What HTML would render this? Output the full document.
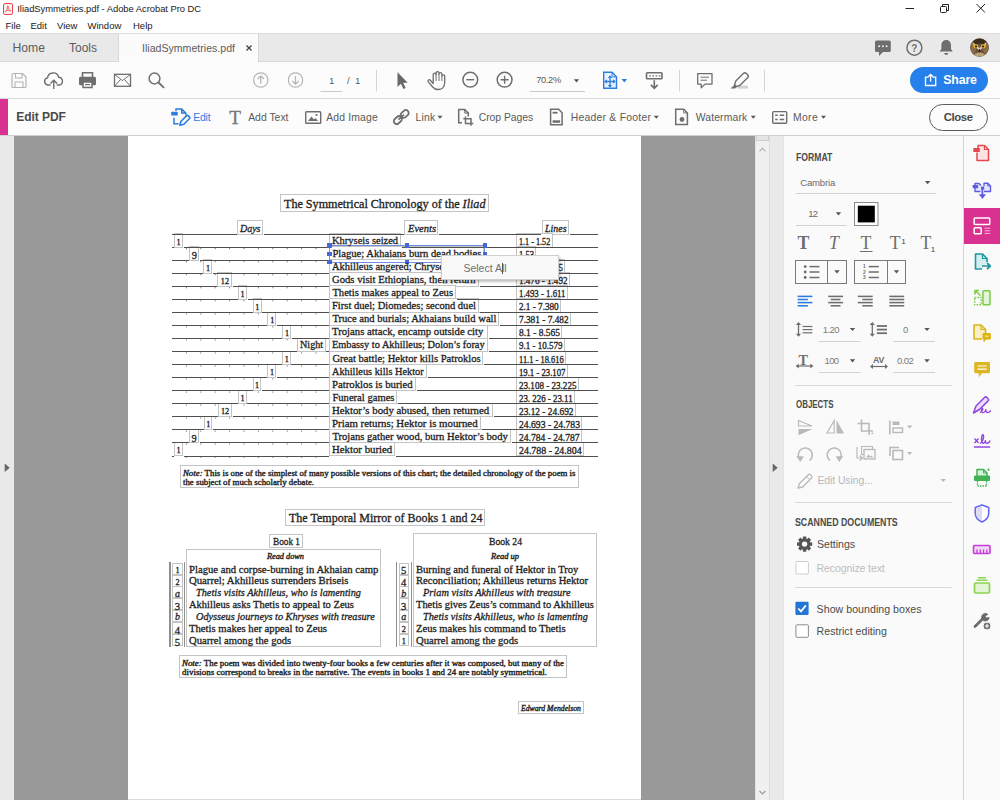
<!DOCTYPE html>
<html><head><meta charset="utf-8"><title>IliadSymmetries.pdf - Adobe Acrobat Pro DC</title><style>
*{box-sizing:border-box;margin:0;padding:0}
html,body{width:1000px;height:800px;overflow:hidden;background:#fff}
body{font-family:"Liberation Sans",sans-serif;position:relative;color:#4b4b4b}
.a{position:absolute}
.t{position:absolute;white-space:nowrap;line-height:1}
.s{font-family:"Liberation Serif",serif;color:#222}
svg{position:absolute;overflow:visible}
.bx{position:absolute;border:1px solid #bdbdbd}
</style></head><body>
<div class="a" style="left:0;top:0;width:1000px;height:17px;background:#fff"></div>
<svg style="left:3.300px;top:2.500px" width="10" height="12" viewBox="0 0 10 12"><rect x="0.5" y="0.5" width="9" height="11" rx="1.5" fill="#fdecec" stroke="#e8484d" stroke-width="1"/><path d="M2.5 8.5 C4 7.5 5 5 4.6 3.4 C4.3 2.6 5.6 2.8 5.2 4 C4.8 5.6 6 7 7.6 7.4 C8.4 7.7 7.6 8.3 6.6 7.700 C5.400 7 3.400 7.600 2.500 8.500Z" fill="none" stroke="#e8484d" stroke-width="0.800"/></svg>
<div class="t" style="left:17.300px;top:4.300px;font-size:9.400px;letter-spacing:-0.030px;color:#1a1a1a">IliadSymmetries.pdf - Adobe Acrobat Pro DC</div>
<svg style="left:0;top:0" width="1000" height="17"><path d="M905.500 8.500 h8.500" stroke="#222" stroke-width="1" fill="none"/><rect x="940.500" y="6.500" width="6" height="6" rx="1" fill="none" stroke="#222"/><path d="M942.500 6.500 v-2 h6 v6 h-2" fill="none" stroke="#222"/><path d="M976.500 4 l8.500 8.500 M985 4 l-8.500 8.500" stroke="#222" stroke-width="1" fill="none"/></svg>
<div class="t" style="left:5.5px;top:20.500px;font-size:9.500px;color:#1a1a1a">File</div>
<div class="t" style="left:30.5px;top:20.500px;font-size:9.500px;color:#1a1a1a">Edit</div>
<div class="t" style="left:57px;top:20.500px;font-size:9.500px;color:#1a1a1a">View</div>
<div class="t" style="left:87.5px;top:20.500px;font-size:9.500px;color:#1a1a1a">Window</div>
<div class="t" style="left:133px;top:20.500px;font-size:9.500px;color:#1a1a1a">Help</div>
<div class="a" style="left:0;top:33px;width:1000px;height:29px;background:#e9e9e9;border-top:1px solid #dedede;border-bottom:1px solid #d8d8d8"></div>
<div class="a" style="left:118px;top:34px;width:141px;height:28px;background:#fbfbfb;border-left:1px solid #d8d8d8;border-right:1px solid #d8d8d8"></div>
<div class="t" style="left:12.500px;top:42px;font-size:12.200px;color:#5c5c5c">Home</div>
<div class="t" style="left:69px;top:42px;font-size:12px;color:#5c5c5c">Tools</div>
<div class="t" style="left:142px;top:43px;font-size:10.600px;color:#5c5c5c">IliadSymmetries.pdf</div>
<svg style="left:245px;top:44px" width="8" height="8"><path d="M1.500 1.500 l5 5 M6.500 1.500 l-5 5" stroke="#444" stroke-width="1.300" fill="none"/></svg>
<svg style="left:0;top:33px" width="1000" height="29"><path d="M876.500 7.500 h12.800 a1.500 1.500 0 0 1 1.500 1.500 v8.500 a1.500 1.500 0 0 1 -1.500 1.500 h-6.300 l-4 4 v-4 h-2.500 a1.500 1.500 0 0 1 -1.500 -1.500 v-8.500 a1.500 1.500 0 0 1 1.500 -1.500z" fill="#6e6e6e"/><circle cx="879.200" cy="13.200" r="1" fill="#eee"/><circle cx="882.900" cy="13.200" r="1" fill="#eee"/><circle cx="886.600" cy="13.200" r="1" fill="#eee"/><circle cx="914.400" cy="14.700" r="7.500" fill="none" stroke="#6e6e6e" stroke-width="1.500"/><text x="914.400" y="18.500" font-size="10" font-weight="bold" text-anchor="middle" fill="#6e6e6e" font-family="Liberation Sans">?</text><path d="M946.200 7 c-3.300 0 -4.800 2.700 -4.800 5.300 v3.700 l-1.800 2.600 h13.200 l-1.800 -2.600 v-3.700 c0 -2.600 -1.500 -5.300 -4.800 -5.300z M944.200 20 a2 2 0 0 0 4 0z" fill="#6e6e6e"/></svg>
<svg style="left:969.500px;top:38px" width="19" height="19" viewBox="0 0 19 19"><defs><clipPath id="av"><circle cx="9.500" cy="9.500" r="9.300"/></clipPath></defs><g clip-path="url(#av)"><rect width="19" height="19" fill="#3b2b1d"/><ellipse cx="9.500" cy="12" rx="7.500" ry="6.500" fill="#6d5236"/><ellipse cx="3" cy="10" rx="3" ry="6" fill="#8a6d48"/><ellipse cx="16" cy="10" rx="3" ry="6" fill="#8a6d48"/><path d="M2.500 4.500 L9.500 10 L16.500 4.500 L15 8 L9.500 12.500 L4 8z" fill="#d8d2c4"/><ellipse cx="5.800" cy="8.300" rx="2.400" ry="2" fill="#e3b52c"/><ellipse cx="13.200" cy="8.300" rx="2.400" ry="2" fill="#e3b52c"/><circle cx="6" cy="8.400" r="1" fill="#111"/><circle cx="13" cy="8.400" r="1" fill="#111"/><path d="M9.500 10.500 l-1.200 3 h2.400z" fill="#1e1610"/><ellipse cx="9.500" cy="17.500" rx="5.500" ry="3" fill="#b9a27c"/></g></svg>
<div class="a" style="left:0;top:62px;width:1000px;height:36.500px;background:#fcfcfc;border-bottom:1px solid #dadada"></div>
<svg style="left:0;top:62px" width="1000" height="36"><path d="M13 11.500 h9.500 l3.500 3.500 v9.500 a1 1 0 0 1 -1 1 h-12 a1 1 0 0 1 -1 -1 v-12 a1 1 0 0 1 1 -1z" fill="none" stroke="#b4b4b4" stroke-width="1.200"/><path d="M15.500 11.500 v4.500 h6.500 v-4.500 M15 25.500 v-5.500 h8 v5.500" fill="none" stroke="#b4b4b4" stroke-width="1.100"/><path d="M50.500 23 h-2.500 a3.600 3.600 0 0 1 -0.500 -7.100 a5.700 5.700 0 0 1 11.200 -0.600 a3.900 3.900 0 0 1 0.700 7.700 h-2.700" fill="none" stroke="#6e6e6e" stroke-width="1.400"/><path d="M53.800 27 v-8.500 M50.500 21.500 l3.300 -3.300 l3.300 3.300" fill="none" stroke="#6e6e6e" stroke-width="1.400"/><path d="M82.500 15 v-4.200 h10 v4.200" fill="none" stroke="#6e6e6e" stroke-width="1.600"/><rect x="79" y="14.800" width="17" height="8.500" rx="1.500" fill="#6e6e6e"/><rect x="83" y="20" width="9" height="5.500" fill="#fcfcfc" stroke="#6e6e6e" stroke-width="1.500"/><rect x="85" y="22" width="5" height="1.200" fill="#6e6e6e"/><rect x="114.500" y="12.300" width="16" height="12" fill="none" stroke="#6e6e6e" stroke-width="1.300"/><path d="M114.500 12.300 l8 6.300 l8 -6.300 M114.500 24.300 l6 -6.800 M130.500 24.300 l-6 -6.800" fill="none" stroke="#6e6e6e" stroke-width="1"/><circle cx="154.500" cy="16.500" r="5.400" fill="none" stroke="#6e6e6e" stroke-width="1.500"/><path d="M158.500 20.500 l5.500 5.300" stroke="#6e6e6e" stroke-width="1.800" fill="none"/><circle cx="260.800" cy="18" r="7.200" fill="none" stroke="#b4b4b4" stroke-width="1.200"/><path d="M260.800 22 v-8 M257.600 17 l3.200 -3.200 l3.200 3.200" fill="none" stroke="#b4b4b4" stroke-width="1.200"/><circle cx="295.500" cy="18" r="7.200" fill="none" stroke="#b4b4b4" stroke-width="1.200"/><path d="M295.500 14 v8 M292.300 19 l3.200 3.200 l3.200 -3.200" fill="none" stroke="#b4b4b4" stroke-width="1.200"/><path d="M320.500 29.500 h21.500 M530 29.500 h55" stroke="#cacaca" stroke-width="1"/><path d="M376.500 8 v21.500 M679.500 8 v21.500 M764.500 8 v21.500" stroke="#d4d4d4" stroke-width="1"/><path d="M397.500 10.200 v14.800 l3.400 -3.200 l2.600 5.300 l2.200 -1.100 l-2.600 -5.200 h4.600z" fill="#686868"/><path d="M433.200 21.500 V12.500 c0 -1.800 2.900 -1.800 2.900 0 V11 c0 -1.800 2.900 -1.800 2.900 0 V12 c0 -1.800 2.900 -1.800 2.900 0 V14 c0 -1.600 2.800 -1.600 2.800 0 V20.500 c0 4.500 -3 7 -6.500 7 c-2.500 0 -4.200 -0.800 -5.500 -2.500 L428.300 19.800 c-1 -1.500 0.800 -2.800 2 -1.600 L433.200 21.500z" fill="none" stroke="#6e6e6e" stroke-width="1.300" stroke-linejoin="round"/><path d="M436.100 12 V19 M439 12 V19 M441.900 14 V19" stroke="#6e6e6e" stroke-width="1" fill="none"/><circle cx="470.300" cy="17.700" r="7.400" fill="none" stroke="#6e6e6e" stroke-width="1.500"/><path d="M466.300 17.700 h8" stroke="#6e6e6e" stroke-width="1.400"/><circle cx="504.600" cy="17.700" r="7.400" fill="none" stroke="#6e6e6e" stroke-width="1.500"/><path d="M500.600 17.700 h8 M504.600 13.700 v8" stroke="#6e6e6e" stroke-width="1.400"/><path d="M573.800 17.200 h5.400 l-2.700 3.200z" fill="#555"/><path d="M603.700 10.300 h8.300 l4.500 4.500 v11.400 h-12.800z" fill="#e9f2fd" stroke="#2c7de0" stroke-width="1.400"/><path d="M612 10.300 v4.500 h4.500" fill="none" stroke="#2c7de0" stroke-width="1"/><path d="M610 15 v9 M605.500 19.500 h9" fill="none" stroke="#2c7de0" stroke-width="1.300"/><path d="M610 13.300 l-2.200 2.700 h4.400z M610 25.700 l-2.200 -2.700 h4.400z M604.200 19.500 l2.700 -2.200 v4.400z M615.800 19.500 l-2.700 -2.200 v4.400z" fill="#2c7de0"/><path d="M621.500 17 h5.600 l-2.800 3.400z" fill="#2c7de0"/><rect x="646.500" y="10.800" width="15.500" height="6" rx="0.800" fill="none" stroke="#6e6e6e" stroke-width="1.600"/><path d="M649.200 13.800 h1.600 M652.400 13.800 h1.600 M655.600 13.800 h1.600 M658.800 13.800 h1.600" stroke="#6e6e6e" stroke-width="1.300"/><path d="M654.300 18.300 v8 M650.900 22.900 l3.400 3.400 l3.400 -3.400" fill="none" stroke="#6e6e6e" stroke-width="1.600"/><path d="M697.700 11.600 h14.300 v10.500 h-7 l-3.800 3.700 v-3.700 h-3.500z" fill="none" stroke="#6e6e6e" stroke-width="1.300" stroke-linejoin="round"/><path d="M700.500 15.200 h8.500 M700.500 18.200 h6.500" stroke="#6e6e6e" stroke-width="1"/><rect x="737.500" y="23.600" width="10.500" height="3" fill="#d2d2d2"/><path d="M734.500 22.800 L736 18.800 L743.300 11.500 a2.200 2.200 0 0 1 3.100 0 l1.200 1.200 a2.200 2.200 0 0 1 0 3.100 L740.300 23.100 L736.300 24.600z" fill="#fcfcfc" stroke="#6e6e6e" stroke-width="1.400" stroke-linejoin="round"/><path d="M734.700 22.500 L730.600 26.500 h4.600 l1.800 -2z" fill="#6e6e6e"/></svg>
<div class="t" style="left:329px;top:75.500px;font-size:9.500px;color:#5a5a5a">1</div>
<div class="t" style="left:347px;top:75.500px;font-size:9.500px;color:#5a5a5a">/&nbsp; 1</div>
<div class="t" style="left:536.200px;top:75.500px;font-size:9.300px;color:#5a5a5a;letter-spacing:-0.350px">70.2%</div>
<div class="a" style="left:910px;top:67px;width:78px;height:26px;border-radius:13px;background:#2680eb"></div>
<svg style="left:923.500px;top:72.500px" width="14" height="15"><path d="M4.500 4.200 h-3 v8.300 h10.200 v-8.300 h-3 M6.600 8.800 v-7.300 M4.200 3.700 l2.400 -2.400 l2.400 2.400" fill="none" stroke="#fff" stroke-width="1.300"/></svg>
<div class="t" style="left:943.300px;top:73.700px;font-size:12.300px;font-weight:bold;color:#fff;letter-spacing:-0.150px">Share</div>
<div class="a" style="left:0;top:99px;width:1000px;height:37px;background:#fcfcfc;border-bottom:1px solid #cfcfcf"></div>
<div class="a" style="left:0;top:99px;width:8px;height:36px;background:#d9318f"></div>
<div class="t" style="left:16.200px;top:111.200px;font-size:12px;font-weight:bold;color:#4a4a4a;letter-spacing:-0.050px">Edit PDF</div>
<svg style="left:0;top:99px" width="1000" height="37"><path d="M176 12 V10 H181.700 L185.800 14.100 V16.500 M181.700 10 V14.100 H185.800" fill="none" stroke="#2c7de0" stroke-width="1.500"/><path d="M174 18.800 V24.800 H178.500" fill="none" stroke="#2c7de0" stroke-width="1.500"/><rect x="171.200" y="12.800" width="6.600" height="3.800" rx="0.600" fill="#2c7de0"/><path d="M179.800 26.200 L181 22.300 L186.700 16.600 a1 1 0 0 1 1.400 0 L189.600 18.100 a1 1 0 0 1 0 1.400 L183.900 25.200z" fill="#fcfcfc" stroke="#2c7de0" stroke-width="1.600" stroke-linejoin="round"/><rect x="305.700" y="12.700" width="15" height="11.500" rx="0.800" fill="none" stroke="#6e6e6e" stroke-width="1.400"/><path d="M308 22 l3.500 -4.500 l2.500 3 l1.500 -1.500 l2.500 3z" fill="#6e6e6e"/><circle cx="316.500" cy="16" r="1.100" fill="#6e6e6e"/><g transform="translate(401.250 18.050) rotate(-42)" fill="none" stroke="#6e6e6e" stroke-width="1.800"><rect x="0.200" y="-2.900" width="8.800" height="5.800" rx="2.900"/><rect x="-9" y="-2.900" width="8.800" height="5.800" rx="2.900"/><path d="M-3.800 0 H3.800" stroke-width="1.700"/></g><path d="M437.500 16.800 h5 l-2.500 3z" fill="#555"/><path d="M462 23.800 h-3.300 v-13.300 h6 l3.600 3.600 v3.500" fill="none" stroke="#6e6e6e" stroke-width="1.500"/><path d="M464.700 10.500 v3.600 h3.600" fill="none" stroke="#6e6e6e" stroke-width="1"/><path d="M465.500 17.500 v7 h7.800 M463.300 19.700 h7.700 v7" fill="none" stroke="#6e6e6e" stroke-width="1.500"/><path d="M550.600 10.300 h8 l3.500 3.500 v12 h-11.500z" fill="none" stroke="#6e6e6e" stroke-width="1.500"/><rect x="552.600" y="12.800" width="5" height="1.800" fill="#6e6e6e"/><rect x="552.600" y="21.300" width="7.500" height="2.500" fill="#6e6e6e"/><path d="M653.800 16.800 h5 l-2.500 3z" fill="#555"/><path d="M675.700 10.300 h8 l3.700 3.700 v11.500 h-11.700z" fill="none" stroke="#6e6e6e" stroke-width="1.500"/><path d="M683.700 10.300 v3.700 h3.700" fill="none" stroke="#6e6e6e" stroke-width="0.900"/><circle cx="682" cy="20.500" r="2.400" fill="#6e6e6e"/><path d="M750.800 16.800 h5 l-2.500 3z" fill="#555"/><rect x="772.700" y="12.600" width="14" height="11.600" rx="1" fill="none" stroke="#6e6e6e" stroke-width="1.400"/><path d="M775.200 16.200 h2.500 M775.200 20.600 h2.500 M779.700 16.200 h4.500 M779.700 20.600 h4.500" stroke="#6e6e6e" stroke-width="1.500"/><path d="M821 16.800 h5 l-2.500 3z" fill="#555"/></svg>
<div class="t" style="left:229.200px;top:107.67px;font-size:19.200px;color:#757575;-webkit-text-stroke:0.300px #757575;font-family:'Liberation Serif',serif">T</div>
<div class="t" style="left:193.3px;top:112.60px;font-size:10.4px;color:#2c7de0;letter-spacing:-0.202px">Edit</div>
<div class="t" style="left:248.2px;top:112.60px;font-size:10.4px;color:#5a5a5a;letter-spacing:0.006px">Add Text</div>
<div class="t" style="left:326.2px;top:112.60px;font-size:10.4px;color:#5a5a5a;letter-spacing:0.170px">Add Image</div>
<div class="t" style="left:415.5px;top:112.60px;font-size:10.4px;color:#5a5a5a;letter-spacing:0.234px">Link</div>
<div class="t" style="left:478.7px;top:112.60px;font-size:10.4px;color:#5a5a5a;letter-spacing:-0.037px">Crop Pages</div>
<div class="t" style="left:570.7px;top:112.60px;font-size:10.4px;color:#5a5a5a;letter-spacing:0.245px">Header &amp; Footer</div>
<div class="t" style="left:695.7px;top:112.60px;font-size:10.4px;color:#5a5a5a;letter-spacing:0.142px">Watermark</div>
<div class="t" style="left:793px;top:112.60px;font-size:10.4px;color:#5a5a5a;letter-spacing:0.328px">More</div>
<div class="a" style="left:928.500px;top:104px;width:59.500px;height:26.500px;border-radius:13.500px;border:1.400px solid #5a5a5a;background:#fcfcfc"></div>
<div class="t" style="left:943.700px;top:111.800px;font-size:11.400px;font-weight:bold;color:#4a4a4a;letter-spacing:-0.400px">Close</div>
<div class="a" style="left:0;top:136px;width:1000px;height:664px;background:#999"></div>
<div class="a" style="left:0;top:136px;width:14px;height:664px;background:#e9e9e9"></div>
<svg style="left:4px;top:463px" width="7" height="10"><path d="M0.700 0.400 L5.700 4.650 L0.700 8.900z" fill="#666"/></svg>
<div class="a" style="left:128px;top:136px;width:513px;height:664px;background:#fff;border-bottom:1px solid #dcdcdc"></div>
<svg style="left:0;top:0" width="1000" height="800"><rect x="185.9" y="248.1" width="1" height="1.100" fill="#6a6a6a"/><rect x="200.3" y="248.1" width="1" height="1.100" fill="#6a6a6a"/><rect x="214.7" y="248.1" width="1" height="1.100" fill="#6a6a6a"/><rect x="229.1" y="248.1" width="1" height="1.100" fill="#6a6a6a"/><rect x="243.5" y="248.1" width="1" height="1.100" fill="#6a6a6a"/><rect x="257.9" y="248.1" width="1" height="1.100" fill="#6a6a6a"/><rect x="272.3" y="248.1" width="1" height="1.100" fill="#6a6a6a"/><rect x="286.7" y="248.1" width="1" height="1.100" fill="#6a6a6a"/><rect x="301.1" y="248.1" width="1" height="1.100" fill="#6a6a6a"/><rect x="315.5" y="248.1" width="1" height="1.100" fill="#6a6a6a"/><rect x="185.9" y="261.2" width="1" height="1.100" fill="#6a6a6a"/><rect x="200.3" y="261.2" width="1" height="1.100" fill="#6a6a6a"/><rect x="214.7" y="261.2" width="1" height="1.100" fill="#6a6a6a"/><rect x="229.1" y="261.2" width="1" height="1.100" fill="#6a6a6a"/><rect x="243.5" y="261.2" width="1" height="1.100" fill="#6a6a6a"/><rect x="257.9" y="261.2" width="1" height="1.100" fill="#6a6a6a"/><rect x="272.3" y="261.2" width="1" height="1.100" fill="#6a6a6a"/><rect x="286.7" y="261.2" width="1" height="1.100" fill="#6a6a6a"/><rect x="301.1" y="261.2" width="1" height="1.100" fill="#6a6a6a"/><rect x="315.5" y="261.2" width="1" height="1.100" fill="#6a6a6a"/><rect x="185.9" y="274.2" width="1" height="1.100" fill="#6a6a6a"/><rect x="200.3" y="274.2" width="1" height="1.100" fill="#6a6a6a"/><rect x="214.7" y="274.2" width="1" height="1.100" fill="#6a6a6a"/><rect x="229.1" y="274.2" width="1" height="1.100" fill="#6a6a6a"/><rect x="243.5" y="274.2" width="1" height="1.100" fill="#6a6a6a"/><rect x="257.9" y="274.2" width="1" height="1.100" fill="#6a6a6a"/><rect x="272.3" y="274.2" width="1" height="1.100" fill="#6a6a6a"/><rect x="286.7" y="274.2" width="1" height="1.100" fill="#6a6a6a"/><rect x="301.1" y="274.2" width="1" height="1.100" fill="#6a6a6a"/><rect x="315.5" y="274.2" width="1" height="1.100" fill="#6a6a6a"/><rect x="185.9" y="287.2" width="1" height="1.100" fill="#6a6a6a"/><rect x="200.3" y="287.2" width="1" height="1.100" fill="#6a6a6a"/><rect x="214.7" y="287.2" width="1" height="1.100" fill="#6a6a6a"/><rect x="229.1" y="287.2" width="1" height="1.100" fill="#6a6a6a"/><rect x="243.5" y="287.2" width="1" height="1.100" fill="#6a6a6a"/><rect x="257.9" y="287.2" width="1" height="1.100" fill="#6a6a6a"/><rect x="272.3" y="287.2" width="1" height="1.100" fill="#6a6a6a"/><rect x="286.7" y="287.2" width="1" height="1.100" fill="#6a6a6a"/><rect x="301.1" y="287.2" width="1" height="1.100" fill="#6a6a6a"/><rect x="315.5" y="287.2" width="1" height="1.100" fill="#6a6a6a"/><rect x="185.9" y="300.2" width="1" height="1.100" fill="#6a6a6a"/><rect x="200.3" y="300.2" width="1" height="1.100" fill="#6a6a6a"/><rect x="214.7" y="300.2" width="1" height="1.100" fill="#6a6a6a"/><rect x="229.1" y="300.2" width="1" height="1.100" fill="#6a6a6a"/><rect x="243.5" y="300.2" width="1" height="1.100" fill="#6a6a6a"/><rect x="257.9" y="300.2" width="1" height="1.100" fill="#6a6a6a"/><rect x="272.3" y="300.2" width="1" height="1.100" fill="#6a6a6a"/><rect x="286.7" y="300.2" width="1" height="1.100" fill="#6a6a6a"/><rect x="301.1" y="300.2" width="1" height="1.100" fill="#6a6a6a"/><rect x="315.5" y="300.2" width="1" height="1.100" fill="#6a6a6a"/><rect x="185.9" y="313.3" width="1" height="1.100" fill="#6a6a6a"/><rect x="200.3" y="313.3" width="1" height="1.100" fill="#6a6a6a"/><rect x="214.7" y="313.3" width="1" height="1.100" fill="#6a6a6a"/><rect x="229.1" y="313.3" width="1" height="1.100" fill="#6a6a6a"/><rect x="243.5" y="313.3" width="1" height="1.100" fill="#6a6a6a"/><rect x="257.9" y="313.3" width="1" height="1.100" fill="#6a6a6a"/><rect x="272.3" y="313.3" width="1" height="1.100" fill="#6a6a6a"/><rect x="286.7" y="313.3" width="1" height="1.100" fill="#6a6a6a"/><rect x="301.1" y="313.3" width="1" height="1.100" fill="#6a6a6a"/><rect x="315.5" y="313.3" width="1" height="1.100" fill="#6a6a6a"/><rect x="185.9" y="326.3" width="1" height="1.100" fill="#6a6a6a"/><rect x="200.3" y="326.3" width="1" height="1.100" fill="#6a6a6a"/><rect x="214.7" y="326.3" width="1" height="1.100" fill="#6a6a6a"/><rect x="229.1" y="326.3" width="1" height="1.100" fill="#6a6a6a"/><rect x="243.5" y="326.3" width="1" height="1.100" fill="#6a6a6a"/><rect x="257.9" y="326.3" width="1" height="1.100" fill="#6a6a6a"/><rect x="272.3" y="326.3" width="1" height="1.100" fill="#6a6a6a"/><rect x="286.7" y="326.3" width="1" height="1.100" fill="#6a6a6a"/><rect x="301.1" y="326.3" width="1" height="1.100" fill="#6a6a6a"/><rect x="315.5" y="326.3" width="1" height="1.100" fill="#6a6a6a"/><rect x="185.9" y="339.3" width="1" height="1.100" fill="#6a6a6a"/><rect x="200.3" y="339.3" width="1" height="1.100" fill="#6a6a6a"/><rect x="214.7" y="339.3" width="1" height="1.100" fill="#6a6a6a"/><rect x="229.1" y="339.3" width="1" height="1.100" fill="#6a6a6a"/><rect x="243.5" y="339.3" width="1" height="1.100" fill="#6a6a6a"/><rect x="257.9" y="339.3" width="1" height="1.100" fill="#6a6a6a"/><rect x="272.3" y="339.3" width="1" height="1.100" fill="#6a6a6a"/><rect x="286.7" y="339.3" width="1" height="1.100" fill="#6a6a6a"/><rect x="301.1" y="339.3" width="1" height="1.100" fill="#6a6a6a"/><rect x="315.5" y="339.3" width="1" height="1.100" fill="#6a6a6a"/><rect x="185.9" y="352.4" width="1" height="1.100" fill="#6a6a6a"/><rect x="200.3" y="352.4" width="1" height="1.100" fill="#6a6a6a"/><rect x="214.7" y="352.4" width="1" height="1.100" fill="#6a6a6a"/><rect x="229.1" y="352.4" width="1" height="1.100" fill="#6a6a6a"/><rect x="243.5" y="352.4" width="1" height="1.100" fill="#6a6a6a"/><rect x="257.9" y="352.4" width="1" height="1.100" fill="#6a6a6a"/><rect x="272.3" y="352.4" width="1" height="1.100" fill="#6a6a6a"/><rect x="286.7" y="352.4" width="1" height="1.100" fill="#6a6a6a"/><rect x="301.1" y="352.4" width="1" height="1.100" fill="#6a6a6a"/><rect x="315.5" y="352.4" width="1" height="1.100" fill="#6a6a6a"/><rect x="185.9" y="365.4" width="1" height="1.100" fill="#6a6a6a"/><rect x="200.3" y="365.4" width="1" height="1.100" fill="#6a6a6a"/><rect x="214.7" y="365.4" width="1" height="1.100" fill="#6a6a6a"/><rect x="229.1" y="365.4" width="1" height="1.100" fill="#6a6a6a"/><rect x="243.5" y="365.4" width="1" height="1.100" fill="#6a6a6a"/><rect x="257.9" y="365.4" width="1" height="1.100" fill="#6a6a6a"/><rect x="272.3" y="365.4" width="1" height="1.100" fill="#6a6a6a"/><rect x="286.7" y="365.4" width="1" height="1.100" fill="#6a6a6a"/><rect x="301.1" y="365.4" width="1" height="1.100" fill="#6a6a6a"/><rect x="315.5" y="365.4" width="1" height="1.100" fill="#6a6a6a"/><rect x="185.9" y="378.4" width="1" height="1.100" fill="#6a6a6a"/><rect x="200.3" y="378.4" width="1" height="1.100" fill="#6a6a6a"/><rect x="214.7" y="378.4" width="1" height="1.100" fill="#6a6a6a"/><rect x="229.1" y="378.4" width="1" height="1.100" fill="#6a6a6a"/><rect x="243.5" y="378.4" width="1" height="1.100" fill="#6a6a6a"/><rect x="257.9" y="378.4" width="1" height="1.100" fill="#6a6a6a"/><rect x="272.3" y="378.4" width="1" height="1.100" fill="#6a6a6a"/><rect x="286.7" y="378.4" width="1" height="1.100" fill="#6a6a6a"/><rect x="301.1" y="378.4" width="1" height="1.100" fill="#6a6a6a"/><rect x="315.5" y="378.4" width="1" height="1.100" fill="#6a6a6a"/><rect x="185.9" y="391.5" width="1" height="1.100" fill="#6a6a6a"/><rect x="200.3" y="391.5" width="1" height="1.100" fill="#6a6a6a"/><rect x="214.7" y="391.5" width="1" height="1.100" fill="#6a6a6a"/><rect x="229.1" y="391.5" width="1" height="1.100" fill="#6a6a6a"/><rect x="243.5" y="391.5" width="1" height="1.100" fill="#6a6a6a"/><rect x="257.9" y="391.5" width="1" height="1.100" fill="#6a6a6a"/><rect x="272.3" y="391.5" width="1" height="1.100" fill="#6a6a6a"/><rect x="286.7" y="391.5" width="1" height="1.100" fill="#6a6a6a"/><rect x="301.1" y="391.5" width="1" height="1.100" fill="#6a6a6a"/><rect x="315.5" y="391.5" width="1" height="1.100" fill="#6a6a6a"/><rect x="185.9" y="404.5" width="1" height="1.100" fill="#6a6a6a"/><rect x="200.3" y="404.5" width="1" height="1.100" fill="#6a6a6a"/><rect x="214.7" y="404.5" width="1" height="1.100" fill="#6a6a6a"/><rect x="229.1" y="404.5" width="1" height="1.100" fill="#6a6a6a"/><rect x="243.5" y="404.5" width="1" height="1.100" fill="#6a6a6a"/><rect x="257.9" y="404.5" width="1" height="1.100" fill="#6a6a6a"/><rect x="272.3" y="404.5" width="1" height="1.100" fill="#6a6a6a"/><rect x="286.7" y="404.5" width="1" height="1.100" fill="#6a6a6a"/><rect x="301.1" y="404.5" width="1" height="1.100" fill="#6a6a6a"/><rect x="315.5" y="404.5" width="1" height="1.100" fill="#6a6a6a"/><rect x="185.9" y="417.5" width="1" height="1.100" fill="#6a6a6a"/><rect x="200.3" y="417.5" width="1" height="1.100" fill="#6a6a6a"/><rect x="214.7" y="417.5" width="1" height="1.100" fill="#6a6a6a"/><rect x="229.1" y="417.5" width="1" height="1.100" fill="#6a6a6a"/><rect x="243.5" y="417.5" width="1" height="1.100" fill="#6a6a6a"/><rect x="257.9" y="417.5" width="1" height="1.100" fill="#6a6a6a"/><rect x="272.3" y="417.5" width="1" height="1.100" fill="#6a6a6a"/><rect x="286.7" y="417.5" width="1" height="1.100" fill="#6a6a6a"/><rect x="301.1" y="417.5" width="1" height="1.100" fill="#6a6a6a"/><rect x="315.5" y="417.5" width="1" height="1.100" fill="#6a6a6a"/><rect x="185.9" y="430.6" width="1" height="1.100" fill="#6a6a6a"/><rect x="200.3" y="430.6" width="1" height="1.100" fill="#6a6a6a"/><rect x="214.7" y="430.6" width="1" height="1.100" fill="#6a6a6a"/><rect x="229.1" y="430.6" width="1" height="1.100" fill="#6a6a6a"/><rect x="243.5" y="430.6" width="1" height="1.100" fill="#6a6a6a"/><rect x="257.9" y="430.6" width="1" height="1.100" fill="#6a6a6a"/><rect x="272.3" y="430.6" width="1" height="1.100" fill="#6a6a6a"/><rect x="286.7" y="430.6" width="1" height="1.100" fill="#6a6a6a"/><rect x="301.1" y="430.6" width="1" height="1.100" fill="#6a6a6a"/><rect x="315.5" y="430.6" width="1" height="1.100" fill="#6a6a6a"/><rect x="185.9" y="443.6" width="1" height="1.100" fill="#6a6a6a"/><rect x="200.3" y="443.6" width="1" height="1.100" fill="#6a6a6a"/><rect x="214.7" y="443.6" width="1" height="1.100" fill="#6a6a6a"/><rect x="229.1" y="443.6" width="1" height="1.100" fill="#6a6a6a"/><rect x="243.5" y="443.6" width="1" height="1.100" fill="#6a6a6a"/><rect x="257.9" y="443.6" width="1" height="1.100" fill="#6a6a6a"/><rect x="272.3" y="443.6" width="1" height="1.100" fill="#6a6a6a"/><rect x="286.7" y="443.6" width="1" height="1.100" fill="#6a6a6a"/><rect x="301.1" y="443.6" width="1" height="1.100" fill="#6a6a6a"/><rect x="315.5" y="443.6" width="1" height="1.100" fill="#6a6a6a"/><rect x="185.9" y="456.6" width="1" height="1.100" fill="#6a6a6a"/><rect x="200.3" y="456.6" width="1" height="1.100" fill="#6a6a6a"/><rect x="214.7" y="456.6" width="1" height="1.100" fill="#6a6a6a"/><rect x="229.1" y="456.6" width="1" height="1.100" fill="#6a6a6a"/><rect x="243.5" y="456.6" width="1" height="1.100" fill="#6a6a6a"/><rect x="257.9" y="456.6" width="1" height="1.100" fill="#6a6a6a"/><rect x="272.3" y="456.6" width="1" height="1.100" fill="#6a6a6a"/><rect x="286.7" y="456.6" width="1" height="1.100" fill="#6a6a6a"/><rect x="301.1" y="456.6" width="1" height="1.100" fill="#6a6a6a"/><rect x="315.5" y="456.6" width="1" height="1.100" fill="#6a6a6a"/></svg>
<div class="a" style="left:280.2px;top:193.5px;width:208.4px;height:18.9px;border:1px solid #c4c4c4;background:#fff"></div>
<div class="a" style="left:236.6px;top:220.0px;width:26.5px;height:15.0px;border:1px solid #c4c4c4;background:#fff"></div>
<div class="a" style="left:404.0px;top:220.0px;width:34.4px;height:15.0px;border:1px solid #c4c4c4;background:#fff"></div>
<div class="a" style="left:541.5px;top:220.2px;width:27.7px;height:14.6px;border:1px solid #c4c4c4;background:#fff"></div>
<div class="a" style="left:173.6px;top:233.3px;width:9.4px;height:14.4px;border:1px solid #c4c4c4;background:#fff"></div>
<div class="a" style="left:329.0px;top:233.3px;width:72.0px;height:14.4px;border:1px solid #c4c4c4;background:#fff"></div>
<div class="a" style="left:516.4px;top:233.3px;width:36.3px;height:14.4px;border:1px solid #c4c4c4;background:#fff"></div>
<div class="a" style="left:188.8px;top:246.3px;width:10.4px;height:14.4px;border:1px solid #c4c4c4;background:#fff"></div>
<div class="a" style="left:329.0px;top:246.3px;width:155.0px;height:14.4px;border:1px solid #c4c4c4;background:#fff"></div>
<div class="a" style="left:516.4px;top:246.3px;width:20.1px;height:14.4px;border:1px solid #c4c4c4;background:#fff"></div>
<div class="a" style="left:203.3px;top:259.4px;width:8.9px;height:14.4px;border:1px solid #c4c4c4;background:#fff"></div>
<div class="a" style="left:329.0px;top:259.4px;width:163.0px;height:14.4px;border:1px solid #c4c4c4;background:#fff"></div>
<div class="a" style="left:516.4px;top:259.4px;width:49.1px;height:14.4px;border:1px solid #c4c4c4;background:#fff"></div>
<div class="a" style="left:217.2px;top:272.4px;width:14.8px;height:14.4px;border:1px solid #c4c4c4;background:#fff"></div>
<div class="a" style="left:329.0px;top:272.4px;width:150.0px;height:14.4px;border:1px solid #c4c4c4;background:#fff"></div>
<div class="a" style="left:516.4px;top:272.4px;width:53.6px;height:14.4px;border:1px solid #c4c4c4;background:#fff"></div>
<div class="a" style="left:237.5px;top:285.4px;width:9.5px;height:14.4px;border:1px solid #c4c4c4;background:#fff"></div>
<div class="a" style="left:329.0px;top:285.4px;width:127.0px;height:14.4px;border:1px solid #c4c4c4;background:#fff"></div>
<div class="a" style="left:516.4px;top:285.4px;width:51.6px;height:14.4px;border:1px solid #c4c4c4;background:#fff"></div>
<div class="a" style="left:252.5px;top:298.4px;width:9.0px;height:14.4px;border:1px solid #c4c4c4;background:#fff"></div>
<div class="a" style="left:329.0px;top:298.4px;width:150.0px;height:14.4px;border:1px solid #c4c4c4;background:#fff"></div>
<div class="a" style="left:516.4px;top:298.4px;width:44.8px;height:14.4px;border:1px solid #c4c4c4;background:#fff"></div>
<div class="a" style="left:267.4px;top:311.5px;width:9.1px;height:14.4px;border:1px solid #c4c4c4;background:#fff"></div>
<div class="a" style="left:329.0px;top:311.5px;width:170.4px;height:14.4px;border:1px solid #c4c4c4;background:#fff"></div>
<div class="a" style="left:516.4px;top:311.5px;width:54.6px;height:14.4px;border:1px solid #c4c4c4;background:#fff"></div>
<div class="a" style="left:282.3px;top:324.5px;width:8.7px;height:14.4px;border:1px solid #c4c4c4;background:#fff"></div>
<div class="a" style="left:329.0px;top:324.5px;width:159.0px;height:14.4px;border:1px solid #c4c4c4;background:#fff"></div>
<div class="a" style="left:516.4px;top:324.5px;width:46.1px;height:14.4px;border:1px solid #c4c4c4;background:#fff"></div>
<div class="a" style="left:296.7px;top:337.5px;width:29.2px;height:14.4px;border:1px solid #c4c4c4;background:#fff"></div>
<div class="a" style="left:329.0px;top:337.5px;width:159.0px;height:14.4px;border:1px solid #c4c4c4;background:#fff"></div>
<div class="a" style="left:516.4px;top:337.5px;width:48.5px;height:14.4px;border:1px solid #c4c4c4;background:#fff"></div>
<div class="a" style="left:282.3px;top:350.6px;width:8.5px;height:14.4px;border:1px solid #c4c4c4;background:#fff"></div>
<div class="a" style="left:329.0px;top:350.6px;width:154.0px;height:14.4px;border:1px solid #c4c4c4;background:#fff"></div>
<div class="a" style="left:516.4px;top:350.6px;width:49.7px;height:14.4px;border:1px solid #c4c4c4;background:#fff"></div>
<div class="a" style="left:267.4px;top:363.6px;width:8.6px;height:14.4px;border:1px solid #c4c4c4;background:#fff"></div>
<div class="a" style="left:329.0px;top:363.6px;width:98.0px;height:14.4px;border:1px solid #c4c4c4;background:#fff"></div>
<div class="a" style="left:516.4px;top:363.6px;width:51.5px;height:14.4px;border:1px solid #c4c4c4;background:#fff"></div>
<div class="a" style="left:252.5px;top:376.6px;width:8.5px;height:14.4px;border:1px solid #c4c4c4;background:#fff"></div>
<div class="a" style="left:329.0px;top:376.6px;width:87.0px;height:14.4px;border:1px solid #c4c4c4;background:#fff"></div>
<div class="a" style="left:516.4px;top:376.6px;width:62.6px;height:14.4px;border:1px solid #c4c4c4;background:#fff"></div>
<div class="a" style="left:237.9px;top:389.7px;width:8.9px;height:14.4px;border:1px solid #c4c4c4;background:#fff"></div>
<div class="a" style="left:329.0px;top:389.7px;width:68.0px;height:14.4px;border:1px solid #c4c4c4;background:#fff"></div>
<div class="a" style="left:516.4px;top:389.7px;width:58.7px;height:14.4px;border:1px solid #c4c4c4;background:#fff"></div>
<div class="a" style="left:217.5px;top:402.7px;width:14.5px;height:14.4px;border:1px solid #c4c4c4;background:#fff"></div>
<div class="a" style="left:329.0px;top:402.7px;width:164.0px;height:14.4px;border:1px solid #c4c4c4;background:#fff"></div>
<div class="a" style="left:516.4px;top:402.7px;width:59.6px;height:14.4px;border:1px solid #c4c4c4;background:#fff"></div>
<div class="a" style="left:203.7px;top:415.7px;width:8.5px;height:14.4px;border:1px solid #c4c4c4;background:#fff"></div>
<div class="a" style="left:329.0px;top:415.7px;width:152.0px;height:14.4px;border:1px solid #c4c4c4;background:#fff"></div>
<div class="a" style="left:516.4px;top:415.7px;width:66.1px;height:14.4px;border:1px solid #c4c4c4;background:#fff"></div>
<div class="a" style="left:188.8px;top:428.8px;width:10.2px;height:14.4px;border:1px solid #c4c4c4;background:#fff"></div>
<div class="a" style="left:329.0px;top:428.8px;width:182.0px;height:14.4px;border:1px solid #c4c4c4;background:#fff"></div>
<div class="a" style="left:516.4px;top:428.8px;width:65.6px;height:14.4px;border:1px solid #c4c4c4;background:#fff"></div>
<div class="a" style="left:173.5px;top:441.8px;width:9.5px;height:14.4px;border:1px solid #c4c4c4;background:#fff"></div>
<div class="a" style="left:329.0px;top:441.8px;width:66.0px;height:14.4px;border:1px solid #c4c4c4;background:#fff"></div>
<div class="a" style="left:516.4px;top:441.8px;width:67.7px;height:14.4px;border:1px solid #c4c4c4;background:#fff"></div>
<div class="a" style="left:171.5px;top:234.00px;width:65.1px;height:1px;background:#505050"></div>
<div class="a" style="left:263.6px;top:234.00px;width:140.4px;height:1px;background:#505050"></div>
<div class="a" style="left:438.9px;top:234.00px;width:102.6px;height:1px;background:#505050"></div>
<div class="a" style="left:569.7px;top:234.00px;width:28.3px;height:1px;background:#505050"></div>
<div class="a" style="left:171.5px;top:247.03px;width:2.1px;height:1px;background:#505050"></div>
<div class="a" style="left:183.5px;top:247.03px;width:145.5px;height:1px;background:#505050"></div>
<div class="a" style="left:401.5px;top:247.03px;width:196.5px;height:1px;background:#505050"></div>
<div class="a" style="left:171.5px;top:260.06px;width:17.3px;height:1px;background:#505050"></div>
<div class="a" style="left:199.7px;top:260.06px;width:129.3px;height:1px;background:#505050"></div>
<div class="a" style="left:484.5px;top:260.06px;width:113.5px;height:1px;background:#505050"></div>
<div class="a" style="left:171.5px;top:273.09px;width:31.8px;height:1px;background:#505050"></div>
<div class="a" style="left:212.7px;top:273.09px;width:116.3px;height:1px;background:#505050"></div>
<div class="a" style="left:492.5px;top:273.09px;width:105.5px;height:1px;background:#505050"></div>
<div class="a" style="left:171.5px;top:286.12px;width:45.7px;height:1px;background:#505050"></div>
<div class="a" style="left:232.5px;top:286.12px;width:96.5px;height:1px;background:#505050"></div>
<div class="a" style="left:479.5px;top:286.12px;width:118.5px;height:1px;background:#505050"></div>
<div class="a" style="left:171.5px;top:299.15px;width:66.0px;height:1px;background:#505050"></div>
<div class="a" style="left:247.5px;top:299.15px;width:81.5px;height:1px;background:#505050"></div>
<div class="a" style="left:456.5px;top:299.15px;width:141.5px;height:1px;background:#505050"></div>
<div class="a" style="left:171.5px;top:312.18px;width:81.0px;height:1px;background:#505050"></div>
<div class="a" style="left:262.0px;top:312.18px;width:67.0px;height:1px;background:#505050"></div>
<div class="a" style="left:479.5px;top:312.18px;width:118.5px;height:1px;background:#505050"></div>
<div class="a" style="left:171.5px;top:325.21px;width:95.9px;height:1px;background:#505050"></div>
<div class="a" style="left:277.0px;top:325.21px;width:52.0px;height:1px;background:#505050"></div>
<div class="a" style="left:499.9px;top:325.21px;width:98.1px;height:1px;background:#505050"></div>
<div class="a" style="left:171.5px;top:338.24px;width:110.8px;height:1px;background:#505050"></div>
<div class="a" style="left:291.5px;top:338.24px;width:37.5px;height:1px;background:#505050"></div>
<div class="a" style="left:488.5px;top:338.24px;width:109.5px;height:1px;background:#505050"></div>
<div class="a" style="left:171.5px;top:351.27px;width:125.2px;height:1px;background:#505050"></div>
<div class="a" style="left:326.4px;top:351.27px;width:2.6px;height:1px;background:#505050"></div>
<div class="a" style="left:488.5px;top:351.27px;width:109.5px;height:1px;background:#505050"></div>
<div class="a" style="left:171.5px;top:364.30px;width:110.8px;height:1px;background:#505050"></div>
<div class="a" style="left:291.3px;top:364.30px;width:37.7px;height:1px;background:#505050"></div>
<div class="a" style="left:483.5px;top:364.30px;width:114.5px;height:1px;background:#505050"></div>
<div class="a" style="left:171.5px;top:377.33px;width:95.9px;height:1px;background:#505050"></div>
<div class="a" style="left:276.5px;top:377.33px;width:52.5px;height:1px;background:#505050"></div>
<div class="a" style="left:427.5px;top:377.33px;width:170.5px;height:1px;background:#505050"></div>
<div class="a" style="left:171.5px;top:390.36px;width:81.0px;height:1px;background:#505050"></div>
<div class="a" style="left:261.5px;top:390.36px;width:67.5px;height:1px;background:#505050"></div>
<div class="a" style="left:416.5px;top:390.36px;width:181.5px;height:1px;background:#505050"></div>
<div class="a" style="left:171.5px;top:403.39px;width:66.4px;height:1px;background:#505050"></div>
<div class="a" style="left:247.3px;top:403.39px;width:81.7px;height:1px;background:#505050"></div>
<div class="a" style="left:397.5px;top:403.39px;width:200.5px;height:1px;background:#505050"></div>
<div class="a" style="left:171.5px;top:416.42px;width:46.0px;height:1px;background:#505050"></div>
<div class="a" style="left:232.5px;top:416.42px;width:96.5px;height:1px;background:#505050"></div>
<div class="a" style="left:493.5px;top:416.42px;width:104.5px;height:1px;background:#505050"></div>
<div class="a" style="left:171.5px;top:429.45px;width:32.2px;height:1px;background:#505050"></div>
<div class="a" style="left:212.7px;top:429.45px;width:116.3px;height:1px;background:#505050"></div>
<div class="a" style="left:481.5px;top:429.45px;width:116.5px;height:1px;background:#505050"></div>
<div class="a" style="left:171.5px;top:442.48px;width:17.3px;height:1px;background:#505050"></div>
<div class="a" style="left:199.5px;top:442.48px;width:129.5px;height:1px;background:#505050"></div>
<div class="a" style="left:511.5px;top:442.48px;width:86.5px;height:1px;background:#505050"></div>
<div class="a" style="left:171.5px;top:455.51px;width:2.0px;height:1px;background:#505050"></div>
<div class="a" style="left:183.5px;top:455.51px;width:145.5px;height:1px;background:#505050"></div>
<div class="a" style="left:395.5px;top:455.51px;width:202.5px;height:1px;background:#505050"></div>
<div class="a" style="left:329px;top:245px;width:156px;height:17.500px;border:1px solid #6f8fe0"></div>
<div class="a" style="left:327.2px;top:243.2px;width:4.600px;height:4.600px;background:#4468d6"></div>
<div class="a" style="left:404.7px;top:243.2px;width:4.600px;height:4.600px;background:#4468d6"></div>
<div class="a" style="left:482.7px;top:243.2px;width:4.600px;height:4.600px;background:#4468d6"></div>
<div class="a" style="left:327.2px;top:251.7px;width:4.600px;height:4.600px;background:#4468d6"></div>
<div class="a" style="left:482.7px;top:251.7px;width:4.600px;height:4.600px;background:#4468d6"></div>
<div class="a" style="left:327.2px;top:259.7px;width:4.600px;height:4.600px;background:#4468d6"></div>
<div class="a" style="left:404.7px;top:259.7px;width:4.600px;height:4.600px;background:#4468d6"></div>
<div class="a" style="left:482.7px;top:259.7px;width:4.600px;height:4.600px;background:#4468d6"></div>
<div class="a" style="left:179.9px;top:465.2px;width:398.7px;height:23.3px;border:1px solid #c4c4c4;background:#fff"></div>
<div class="a" style="left:284.6px;top:509.2px;width:200.7px;height:17.0px;border:1px solid #c4c4c4;background:#fff"></div>
<div class="a" style="left:269.2px;top:534.0px;width:33.8px;height:13.8px;border:1px solid #c4c4c4;background:#fff"></div>
<div class="a" style="left:186.2px;top:549.4px;width:195.0px;height:97.3px;border:1px solid #c4c4c4;background:#fff"></div>
<div class="a" style="left:412.6px;top:533.3px;width:184.0px;height:113.4px;border:1px solid #c4c4c4;background:#fff"></div>
<div class="a" style="left:169.3px;top:562px;width:1.300px;height:84.500px;background:#8f8f8f"></div>
<div class="a" style="left:184.2px;top:562px;width:1.300px;height:84.500px;background:#8f8f8f"></div>
<div class="a" style="left:396.2px;top:562px;width:1.300px;height:84.500px;background:#8f8f8f"></div>
<div class="a" style="left:410.8px;top:562px;width:1.300px;height:84.500px;background:#8f8f8f"></div>
<div class="a" style="left:172.3px;top:562.6px;width:11.0px;height:12.0px;border:1px solid #c4c4c4;background:#fff"></div>
<div class="a" style="left:398.5px;top:562.6px;width:10.8px;height:12.0px;border:1px solid #c4c4c4;background:#fff"></div>
<div class="a" style="left:172.3px;top:574.5px;width:11.0px;height:12.0px;border:1px solid #c4c4c4;background:#fff"></div>
<div class="a" style="left:398.5px;top:574.5px;width:10.8px;height:12.0px;border:1px solid #c4c4c4;background:#fff"></div>
<div class="a" style="left:172.3px;top:586.3px;width:11.0px;height:12.0px;border:1px solid #c4c4c4;background:#fff"></div>
<div class="a" style="left:398.5px;top:586.3px;width:10.8px;height:12.0px;border:1px solid #c4c4c4;background:#fff"></div>
<div class="a" style="left:172.3px;top:598.1px;width:11.0px;height:12.0px;border:1px solid #c4c4c4;background:#fff"></div>
<div class="a" style="left:398.5px;top:598.1px;width:10.8px;height:12.0px;border:1px solid #c4c4c4;background:#fff"></div>
<div class="a" style="left:172.3px;top:610.0px;width:11.0px;height:12.0px;border:1px solid #c4c4c4;background:#fff"></div>
<div class="a" style="left:398.5px;top:610.0px;width:10.8px;height:12.0px;border:1px solid #c4c4c4;background:#fff"></div>
<div class="a" style="left:172.3px;top:621.9px;width:11.0px;height:12.0px;border:1px solid #c4c4c4;background:#fff"></div>
<div class="a" style="left:398.5px;top:621.9px;width:10.8px;height:12.0px;border:1px solid #c4c4c4;background:#fff"></div>
<div class="a" style="left:172.3px;top:633.7px;width:11.0px;height:12.0px;border:1px solid #c4c4c4;background:#fff"></div>
<div class="a" style="left:398.5px;top:633.7px;width:10.8px;height:12.0px;border:1px solid #c4c4c4;background:#fff"></div>
<div class="a" style="left:179.3px;top:655.2px;width:387.7px;height:23.0px;border:1px solid #c4c4c4;background:#fff"></div>
<div class="a" style="left:517.9px;top:701.2px;width:66.1px;height:13.3px;border:1px solid #c4c4c4;background:#fff"></div>
<div class="t s" style="left:284.00px;top:199.28px;font-size:11.6px;color:#1e1e1e;transform:scaleX(1.0446);transform-origin:0 0;-webkit-text-stroke:0.300px #1e1e1e;">The Symmetrical Chronology of the <i>Iliad</i></div>
<div class="t s" style="left:240.00px;top:223.76px;font-size:10.2px;color:#1e1e1e;font-style:italic;transform:scaleX(0.9791);transform-origin:0 0;-webkit-text-stroke:0.300px #1e1e1e;">Days</div>
<div class="t s" style="left:407.50px;top:223.76px;font-size:10.2px;color:#1e1e1e;font-style:italic;transform:scaleX(1.0311);transform-origin:0 0;-webkit-text-stroke:0.300px #1e1e1e;">Events</div>
<div class="t s" style="left:545.00px;top:223.76px;font-size:10.2px;color:#1e1e1e;font-style:italic;transform:scaleX(0.9738);transform-origin:0 0;-webkit-text-stroke:0.300px #1e1e1e;">Lines</div>
<div class="t s" style="left:176.55px;top:238.56px;font-size:8.2px;color:#1e1e1e;-webkit-text-stroke:0.300px #1e1e1e;">1</div>
<div class="t s" style="left:332.40px;top:236.25px;font-size:10.6px;color:#1e1e1e;transform:scaleX(0.9898);transform-origin:0 0;-webkit-text-stroke:0.300px #1e1e1e;">Khryseis seized</div>
<div class="t s" style="left:519.00px;top:238.24px;font-size:9.3px;color:#1e1e1e;transform:scaleX(0.8754);transform-origin:0 0;-webkit-text-stroke:0.300px #1e1e1e;">1.1 - 1.52</div>
<div class="t s" style="left:191.70px;top:251.15px;font-size:10.4px;color:#1e1e1e;-webkit-text-stroke:0.300px #1e1e1e;">9</div>
<div class="t s" style="left:332.40px;top:249.28px;font-size:10.6px;color:#1e1e1e;-webkit-text-stroke:0.300px #1e1e1e;">Plague; Akhaians burn dead bodies</div>
<div class="t s" style="left:519.00px;top:251.27px;font-size:9.3px;color:#1e1e1e;transform:scaleX(0.9213);transform-origin:0 0;-webkit-text-stroke:0.300px #1e1e1e;">1.53</div>
<div class="t s" style="left:206.00px;top:264.62px;font-size:8.2px;color:#1e1e1e;-webkit-text-stroke:0.300px #1e1e1e;">1</div>
<div class="t s" style="left:332.40px;top:262.31px;font-size:10.6px;color:#1e1e1e;transform:scaleX(0.9912);transform-origin:0 0;-webkit-text-stroke:0.300px #1e1e1e;">Akhilleus angered; Chryseis returned</div>
<div class="t s" style="left:519.00px;top:264.30px;font-size:9.3px;color:#1e1e1e;transform:scaleX(0.8872);transform-origin:0 0;-webkit-text-stroke:0.300px #1e1e1e;">1.318 - 1.475</div>
<div class="t s" style="left:220.81px;top:277.65px;font-size:8.2px;color:#1e1e1e;-webkit-text-stroke:0.300px #1e1e1e;">12</div>
<div class="t s" style="left:332.40px;top:275.34px;font-size:10.6px;color:#1e1e1e;transform:scaleX(1.0062);transform-origin:0 0;-webkit-text-stroke:0.300px #1e1e1e;">Gods visit Ethiopians, then return</div>
<div class="t s" style="left:519.00px;top:277.33px;font-size:9.3px;color:#1e1e1e;transform:scaleX(0.9779);transform-origin:0 0;-webkit-text-stroke:0.300px #1e1e1e;">1.476 - 1.492</div>
<div class="t s" style="left:240.50px;top:290.68px;font-size:8.2px;color:#1e1e1e;-webkit-text-stroke:0.300px #1e1e1e;">1</div>
<div class="t s" style="left:332.40px;top:288.37px;font-size:10.6px;color:#1e1e1e;-webkit-text-stroke:0.300px #1e1e1e;">Thetis makes appeal to Zeus</div>
<div class="t s" style="left:519.00px;top:290.36px;font-size:9.3px;color:#1e1e1e;transform:scaleX(0.9442);transform-origin:0 0;-webkit-text-stroke:0.300px #1e1e1e;">1.493 - 1.611</div>
<div class="t s" style="left:255.25px;top:303.71px;font-size:8.2px;color:#1e1e1e;-webkit-text-stroke:0.300px #1e1e1e;">1</div>
<div class="t s" style="left:332.40px;top:301.40px;font-size:10.6px;color:#1e1e1e;transform:scaleX(0.9947);transform-origin:0 0;-webkit-text-stroke:0.300px #1e1e1e;">First duel; Diomedes; second duel</div>
<div class="t s" style="left:519.00px;top:303.39px;font-size:9.3px;color:#1e1e1e;transform:scaleX(0.9852);transform-origin:0 0;-webkit-text-stroke:0.300px #1e1e1e;">2.1 - 7.380</div>
<div class="t s" style="left:270.20px;top:316.74px;font-size:8.2px;color:#1e1e1e;-webkit-text-stroke:0.300px #1e1e1e;">1</div>
<div class="t s" style="left:332.40px;top:314.43px;font-size:10.6px;color:#1e1e1e;-webkit-text-stroke:0.300px #1e1e1e;">Truce and burials; Akhaians build wall</div>
<div class="t s" style="left:519.00px;top:316.42px;font-size:9.3px;color:#1e1e1e;-webkit-text-stroke:0.300px #1e1e1e;">7.381 - 7.482</div>
<div class="t s" style="left:284.90px;top:329.77px;font-size:8.2px;color:#1e1e1e;-webkit-text-stroke:0.300px #1e1e1e;">1</div>
<div class="t s" style="left:332.40px;top:327.46px;font-size:10.6px;color:#1e1e1e;transform:scaleX(1.0096);transform-origin:0 0;-webkit-text-stroke:0.300px #1e1e1e;">Trojans attack, encamp outside city</div>
<div class="t s" style="left:519.00px;top:329.45px;font-size:9.3px;color:#1e1e1e;transform:scaleX(1.0174);transform-origin:0 0;-webkit-text-stroke:0.300px #1e1e1e;">8.1 - 8.565</div>
<div class="t s" style="left:299.70px;top:340.49px;font-size:10.6px;color:#1e1e1e;transform:scaleX(0.9610);transform-origin:0 0;-webkit-text-stroke:0.300px #1e1e1e;">Night</div>
<div class="t s" style="left:332.40px;top:340.49px;font-size:10.6px;color:#1e1e1e;transform:scaleX(0.9748);transform-origin:0 0;-webkit-text-stroke:0.300px #1e1e1e;">Embassy to Akhilleus; Dolon’s foray</div>
<div class="t s" style="left:519.00px;top:342.48px;font-size:9.3px;color:#1e1e1e;transform:scaleX(0.9658);transform-origin:0 0;-webkit-text-stroke:0.300px #1e1e1e;">9.1 - 10.579</div>
<div class="t s" style="left:284.80px;top:355.83px;font-size:8.2px;color:#1e1e1e;-webkit-text-stroke:0.300px #1e1e1e;">1</div>
<div class="t s" style="left:332.40px;top:353.52px;font-size:10.6px;color:#1e1e1e;-webkit-text-stroke:0.300px #1e1e1e;">Great battle; Hektor kills Patroklos</div>
<div class="t s" style="left:519.00px;top:355.51px;font-size:9.3px;color:#1e1e1e;transform:scaleX(0.9056);transform-origin:0 0;-webkit-text-stroke:0.300px #1e1e1e;">11.1 - 18.616</div>
<div class="t s" style="left:269.95px;top:368.86px;font-size:8.2px;color:#1e1e1e;-webkit-text-stroke:0.300px #1e1e1e;">1</div>
<div class="t s" style="left:332.40px;top:366.55px;font-size:10.6px;color:#1e1e1e;transform:scaleX(0.9727);transform-origin:0 0;-webkit-text-stroke:0.300px #1e1e1e;">Akhilleus kills Hektor</div>
<div class="t s" style="left:519.00px;top:368.54px;font-size:9.3px;color:#1e1e1e;transform:scaleX(0.9356);transform-origin:0 0;-webkit-text-stroke:0.300px #1e1e1e;">19.1 - 23.107</div>
<div class="t s" style="left:255.00px;top:381.89px;font-size:8.2px;color:#1e1e1e;-webkit-text-stroke:0.300px #1e1e1e;">1</div>
<div class="t s" style="left:332.40px;top:379.58px;font-size:10.6px;color:#1e1e1e;transform:scaleX(1.0144);transform-origin:0 0;-webkit-text-stroke:0.300px #1e1e1e;">Patroklos is buried</div>
<div class="t s" style="left:519.00px;top:381.57px;font-size:9.3px;color:#1e1e1e;transform:scaleX(0.9764);transform-origin:0 0;-webkit-text-stroke:0.300px #1e1e1e;">23.108 - 23.225</div>
<div class="t s" style="left:240.60px;top:394.92px;font-size:8.2px;color:#1e1e1e;-webkit-text-stroke:0.300px #1e1e1e;">1</div>
<div class="t s" style="left:332.40px;top:392.61px;font-size:10.6px;color:#1e1e1e;-webkit-text-stroke:0.300px #1e1e1e;">Funeral games</div>
<div class="t s" style="left:519.00px;top:394.60px;font-size:9.3px;color:#1e1e1e;transform:scaleX(0.9534);transform-origin:0 0;-webkit-text-stroke:0.300px #1e1e1e;">23. 226 - 23.11</div>
<div class="t s" style="left:220.96px;top:407.95px;font-size:8.2px;color:#1e1e1e;-webkit-text-stroke:0.300px #1e1e1e;">12</div>
<div class="t s" style="left:332.40px;top:405.64px;font-size:10.6px;color:#1e1e1e;transform:scaleX(1.0184);transform-origin:0 0;-webkit-text-stroke:0.300px #1e1e1e;">Hektor’s body abused, then returned</div>
<div class="t s" style="left:519.00px;top:407.63px;font-size:9.3px;color:#1e1e1e;transform:scaleX(1.0049);transform-origin:0 0;-webkit-text-stroke:0.300px #1e1e1e;">23.12 - 24.692</div>
<div class="t s" style="left:206.20px;top:420.98px;font-size:8.2px;color:#1e1e1e;-webkit-text-stroke:0.300px #1e1e1e;">1</div>
<div class="t s" style="left:332.40px;top:418.67px;font-size:10.6px;color:#1e1e1e;transform:scaleX(1.0224);transform-origin:0 0;-webkit-text-stroke:0.300px #1e1e1e;">Priam returns; Hektor is mourned</div>
<div class="t s" style="left:519.00px;top:420.66px;font-size:9.3px;color:#1e1e1e;transform:scaleX(1.0358);transform-origin:0 0;-webkit-text-stroke:0.300px #1e1e1e;">24.693 - 24.783</div>
<div class="t s" style="left:191.60px;top:433.57px;font-size:10.4px;color:#1e1e1e;-webkit-text-stroke:0.300px #1e1e1e;">9</div>
<div class="t s" style="left:332.40px;top:431.70px;font-size:10.6px;color:#1e1e1e;-webkit-text-stroke:0.300px #1e1e1e;">Trojans gather wood, burn Hektor’s body</div>
<div class="t s" style="left:519.00px;top:433.69px;font-size:9.3px;color:#1e1e1e;transform:scaleX(1.0273);transform-origin:0 0;-webkit-text-stroke:0.300px #1e1e1e;">24.784 - 24.787</div>
<div class="t s" style="left:176.50px;top:447.04px;font-size:8.2px;color:#1e1e1e;-webkit-text-stroke:0.300px #1e1e1e;">1</div>
<div class="t s" style="left:332.40px;top:444.73px;font-size:10.6px;color:#1e1e1e;transform:scaleX(1.0179);transform-origin:0 0;-webkit-text-stroke:0.300px #1e1e1e;">Hektor buried</div>
<div class="t s" style="left:519.00px;top:446.72px;font-size:9.3px;color:#1e1e1e;transform:scaleX(1.0630);transform-origin:0 0;-webkit-text-stroke:0.300px #1e1e1e;">24.788 - 24.804</div>
<div class="t s" style="left:182.50px;top:470.07px;font-size:7.8px;color:#1e1e1e;transform:scaleX(1.1290);transform-origin:0 0;-webkit-text-stroke:0.350px #1e1e1e;"><i>Note:</i> This is one of the simplest of many possible versions of this chart; the detailed chronology of the poem is</div>
<div class="t s" style="left:182.50px;top:479.07px;font-size:7.8px;color:#1e1e1e;transform:scaleX(1.1287);transform-origin:0 0;-webkit-text-stroke:0.350px #1e1e1e;">the subject of much scholarly debate.</div>
<div class="t s" style="left:288.50px;top:513.28px;font-size:11.6px;color:#1e1e1e;transform:scaleX(1.0364);transform-origin:0 0;-webkit-text-stroke:0.300px #1e1e1e;">The Temporal Mirror of Books 1 and 24</div>
<div class="t s" style="left:272.50px;top:536.92px;font-size:10.6px;color:#1e1e1e;transform:scaleX(0.8736);transform-origin:0 0;-webkit-text-stroke:0.300px #1e1e1e;">Book 1</div>
<div class="t s" style="left:488.80px;top:536.92px;font-size:10.6px;color:#1e1e1e;transform:scaleX(0.9115);transform-origin:0 0;-webkit-text-stroke:0.300px #1e1e1e;">Book 24</div>
<div class="t s" style="left:267.20px;top:553.43px;font-size:7.6px;color:#1e1e1e;font-style:italic;transform:scaleX(1.0892);transform-origin:0 0;-webkit-text-stroke:0.350px #1e1e1e;">Read down</div>
<div class="t s" style="left:491.30px;top:553.43px;font-size:7.6px;color:#1e1e1e;font-style:italic;transform:scaleX(1.1151);transform-origin:0 0;-webkit-text-stroke:0.350px #1e1e1e;">Read up</div>
<div class="t s" style="left:175.45px;top:566.83px;font-size:8.2px;color:#1e1e1e;-webkit-text-stroke:0.300px #1e1e1e;">1</div>
<div class="t s" style="left:401.05px;top:566.42px;font-size:10.6px;color:#1e1e1e;-webkit-text-stroke:0.300px #1e1e1e;">5</div>
<div class="t s" style="left:189.10px;top:564.52px;font-size:10.6px;color:#1e1e1e;transform:scaleX(1.0069);transform-origin:0 0;-webkit-text-stroke:0.300px #1e1e1e;">Plague and corpse-burning in Akhaian camp</div>
<div class="t s" style="left:416.00px;top:564.52px;font-size:10.6px;color:#1e1e1e;-webkit-text-stroke:0.300px #1e1e1e;">Burning and funeral of Hektor in Troy</div>
<div class="t s" style="left:175.45px;top:578.68px;font-size:8.2px;color:#1e1e1e;-webkit-text-stroke:0.300px #1e1e1e;">2</div>
<div class="t s" style="left:401.05px;top:578.27px;font-size:10.6px;color:#1e1e1e;-webkit-text-stroke:0.300px #1e1e1e;">4</div>
<div class="t s" style="left:189.10px;top:576.37px;font-size:10.6px;color:#1e1e1e;transform:scaleX(1.0127);transform-origin:0 0;-webkit-text-stroke:0.300px #1e1e1e;">Quarrel; Akhilleus surrenders Briseis</div>
<div class="t s" style="left:416.00px;top:576.37px;font-size:10.6px;color:#1e1e1e;-webkit-text-stroke:0.300px #1e1e1e;">Reconciliation; Akhilleus returns Hektor</div>
<div class="t s" style="left:175.00px;top:588.73px;font-size:10px;color:#1e1e1e;font-style:italic;-webkit-text-stroke:0.300px #1e1e1e;">a</div>
<div class="t s" style="left:401.20px;top:588.73px;font-size:10px;color:#1e1e1e;font-style:italic;-webkit-text-stroke:0.300px #1e1e1e;">b</div>
<div class="t s" style="left:196.00px;top:588.22px;font-size:10.6px;color:#1e1e1e;font-style:italic;transform:scaleX(0.9711);transform-origin:0 0;-webkit-text-stroke:0.300px #1e1e1e;">Thetis visits Akhilleus, who is lamenting</div>
<div class="t s" style="left:422.50px;top:588.22px;font-size:10.6px;color:#1e1e1e;font-style:italic;transform:scaleX(0.9777);transform-origin:0 0;-webkit-text-stroke:0.300px #1e1e1e;">Priam visits Akhilleus with treasure</div>
<div class="t s" style="left:174.85px;top:601.97px;font-size:10.6px;color:#1e1e1e;-webkit-text-stroke:0.300px #1e1e1e;">3</div>
<div class="t s" style="left:401.05px;top:601.97px;font-size:10.6px;color:#1e1e1e;-webkit-text-stroke:0.300px #1e1e1e;">3</div>
<div class="t s" style="left:189.10px;top:600.07px;font-size:10.6px;color:#1e1e1e;transform:scaleX(0.9913);transform-origin:0 0;-webkit-text-stroke:0.300px #1e1e1e;">Akhilleus asks Thetis to appeal to Zeus</div>
<div class="t s" style="left:416.00px;top:600.07px;font-size:10.6px;color:#1e1e1e;transform:scaleX(0.9857);transform-origin:0 0;-webkit-text-stroke:0.300px #1e1e1e;">Thetis gives Zeus’s command to Akhilleus</div>
<div class="t s" style="left:175.00px;top:612.42px;font-size:10px;color:#1e1e1e;font-style:italic;-webkit-text-stroke:0.300px #1e1e1e;">b</div>
<div class="t s" style="left:401.20px;top:612.42px;font-size:10px;color:#1e1e1e;font-style:italic;-webkit-text-stroke:0.300px #1e1e1e;">a</div>
<div class="t s" style="left:196.00px;top:611.92px;font-size:10.6px;color:#1e1e1e;font-style:italic;transform:scaleX(0.9665);transform-origin:0 0;-webkit-text-stroke:0.300px #1e1e1e;">Odysseus journeys to Khryses with treasure</div>
<div class="t s" style="left:422.50px;top:611.92px;font-size:10.6px;color:#1e1e1e;font-style:italic;transform:scaleX(0.9705);transform-origin:0 0;-webkit-text-stroke:0.300px #1e1e1e;">Thetis visits Akhilleus, who is lamenting</div>
<div class="t s" style="left:174.85px;top:625.67px;font-size:10.6px;color:#1e1e1e;-webkit-text-stroke:0.300px #1e1e1e;">4</div>
<div class="t s" style="left:401.65px;top:626.08px;font-size:8.2px;color:#1e1e1e;-webkit-text-stroke:0.300px #1e1e1e;">2</div>
<div class="t s" style="left:189.10px;top:623.77px;font-size:10.6px;color:#1e1e1e;transform:scaleX(1.0081);transform-origin:0 0;-webkit-text-stroke:0.300px #1e1e1e;">Thetis makes her appeal to Zeus</div>
<div class="t s" style="left:416.00px;top:623.77px;font-size:10.6px;color:#1e1e1e;-webkit-text-stroke:0.300px #1e1e1e;">Zeus makes his command to Thetis</div>
<div class="t s" style="left:174.85px;top:637.52px;font-size:10.6px;color:#1e1e1e;-webkit-text-stroke:0.300px #1e1e1e;">5</div>
<div class="t s" style="left:401.65px;top:637.93px;font-size:8.2px;color:#1e1e1e;-webkit-text-stroke:0.300px #1e1e1e;">1</div>
<div class="t s" style="left:189.10px;top:635.62px;font-size:10.6px;color:#1e1e1e;-webkit-text-stroke:0.300px #1e1e1e;">Quarrel among the gods</div>
<div class="t s" style="left:416.00px;top:635.62px;font-size:10.6px;color:#1e1e1e;-webkit-text-stroke:0.300px #1e1e1e;">Quarrel among the gods</div>
<div class="t s" style="left:182.00px;top:659.77px;font-size:7.8px;color:#1e1e1e;transform:scaleX(1.1379);transform-origin:0 0;-webkit-text-stroke:0.350px #1e1e1e;"><i>Note:</i> The poem was divided into twenty-four books a few centuries after it was composed, but many of the</div>
<div class="t s" style="left:182.00px;top:669.27px;font-size:7.8px;color:#1e1e1e;transform:scaleX(1.1457);transform-origin:0 0;-webkit-text-stroke:0.350px #1e1e1e;">divisions correspond to breaks in the narrative. The events in books 1 and 24 are notably symmetrical.</div>
<div class="t s" style="left:521.00px;top:704.84px;font-size:7.6px;color:#1e1e1e;font-style:italic;transform:scaleX(1.0169);transform-origin:0 0;-webkit-text-stroke:0.350px #1e1e1e;">Edward Mendelson</div>
<div class="a" style="left:441px;top:255px;width:117.500px;height:25px;background:#f9f9f9;border:1px solid #cfcfcf;box-shadow:1px 1.500px 3px rgba(0,0,0,0.300)"></div>
<div class="t" style="left:463.400px;top:262.500px;font-size:10.500px;color:#707070">Select All</div>
<div class="a" style="left:501.500px;top:262.500px;width:1px;height:11px;background:#555"></div>
<div class="a" style="left:755px;top:136px;width:14px;height:664px;background:#f0f0f0;border-left:1px solid #e2e2e2"></div>
<div class="a" style="left:756px;top:136px;width:13px;height:5px;background:#e4e4e4;border:1px solid #cdcdcd;border-top:none"></div>
<svg style="left:756px;top:136px" width="13" height="664"><path d="M3.500 15.300 l3 -3 l3 3" fill="none" stroke="#b0b0b0" stroke-width="1.200"/><path d="M3.500 655 l3 3 l3 -3" fill="none" stroke="#9a9a9a" stroke-width="1.200"/></svg>
<div class="a" style="left:769px;top:136px;width:14px;height:664px;background:#e9e9e9;border-left:1px solid #dcdcdc"></div>
<svg style="left:772.400px;top:463px" width="7" height="10"><path d="M0.700 0.400 L5.700 4.650 L0.700 8.900z" fill="#666"/></svg>
<div class="a" style="left:783px;top:136px;width:217px;height:664px;background:#fafafa;border-left:1px solid #e4e4e4"></div>
<div class="a" style="left:963px;top:136px;width:37px;height:664px;background:#fafafa;border-left:1px solid #d6d6d6"></div>
<div class="t" style="left:795.8px;top:153.34px;font-size:10.0px;color:#4b4b4b;font-weight:bold;transform:scaleX(0.8660);transform-origin:0 0;">FORMAT</div>
<div class="t" style="left:800.3px;top:177.96px;font-size:9.5px;color:#6a6a6a;letter-spacing:-0.172px;">Cambria</div>
<div class="t" style="left:808.3px;top:208.96px;font-size:9.5px;color:#6a6a6a;letter-spacing:-0.789px;">12</div>
<div class="t" style="left:822.7px;top:324.76px;font-size:9.5px;color:#7a7a7a;letter-spacing:-0.550px;">1.20</div>
<div class="t" style="left:903px;top:324.76px;font-size:9.5px;color:#7a7a7a;letter-spacing:-0.497px;">0</div>
<div class="t" style="left:824.6px;top:355.96px;font-size:9.5px;color:#7a7a7a;letter-spacing:-0.653px;">100</div>
<div class="t" style="left:897px;top:355.96px;font-size:9.5px;color:#7a7a7a;letter-spacing:-0.575px;">0.02</div>
<div class="t" style="left:795.5px;top:400.14px;font-size:10.0px;color:#4b4b4b;font-weight:bold;transform:scaleX(0.7939);transform-origin:0 0;">OBJECTS</div>
<div class="t" style="left:817.4px;top:475.50px;font-size:10.4px;color:#b8b8b8;letter-spacing:-0.056px;">Edit Using...</div>
<div class="t" style="left:795.4px;top:517.53px;font-size:10.0px;color:#4b4b4b;font-weight:bold;transform:scaleX(0.8802);transform-origin:0 0;">SCANNED DOCUMENTS</div>
<div class="t" style="left:817.1px;top:538.83px;font-size:10.6px;color:#4b4b4b;letter-spacing:-0.048px;">Settings</div>
<div class="t" style="left:816.6px;top:562.83px;font-size:10.6px;color:#bdbdbd;letter-spacing:-0.148px;">Recognize text</div>
<div class="t" style="left:816.6px;top:603.53px;font-size:10.6px;color:#4b4b4b;letter-spacing:0.039px;">Show bounding boxes</div>
<div class="t" style="left:816.6px;top:626.03px;font-size:10.6px;color:#4b4b4b;letter-spacing:0.014px;">Restrict editing</div>
<svg style="left:0;top:0" width="1000" height="800"><path d="M795.500 193.500 H935.700 M796 225.500 H846.600 M818.700 341.500 H860.600 M893 341.500 H935 M818.700 372.500 H860.600 M893 372.500 H935" stroke="#d2d2d2" stroke-width="1"/><path d="M795.300 385.500 H951.500 M795.300 502.500 H951.500 M795.300 587.500 H951.500" stroke="#d8d8d8" stroke-width="1"/><path d="M924.9 181.1 h5.4 l-2.7 3.2z" fill="#555"/><path d="M835.8 212.2 h5.4 l-2.7 3.2z" fill="#555"/><path d="M849.8 327.9 h5.4 l-2.7 3.2z" fill="#555"/><path d="M924.3 327.9 h5.4 l-2.7 3.2z" fill="#555"/><path d="M849.8 359.2 h5.4 l-2.7 3.2z" fill="#555"/><path d="M924.3 359.2 h5.4 l-2.7 3.2z" fill="#555"/><rect x="854.500" y="202.500" width="23.500" height="23" fill="#fff" stroke="#8a8a8a" stroke-width="1"/><rect x="857.800" y="205.700" width="17" height="16.700" fill="#000"/></svg>
<div class="t" style="left:797.6px;top:235.29px;font-size:17.8px;color:#6e6e6e;font-family:'Liberation Serif',serif;font-weight:bold;">T</div>
<div class="t" style="left:829px;top:235.29px;font-size:17.8px;color:#6e6e6e;font-family:'Liberation Serif',serif;font-style:italic;">T</div>
<div class="t" style="left:860.5px;top:235.29px;font-size:17.8px;color:#6e6e6e;font-family:'Liberation Serif',serif;">T</div>
<div class="t" style="left:889.8px;top:235.29px;font-size:17.8px;color:#6e6e6e;font-family:'Liberation Serif',serif;">T</div>
<div class="t" style="left:920.4px;top:235.29px;font-size:17.8px;color:#6e6e6e;font-family:'Liberation Serif',serif;">T</div>
<div class="t" style="left:798.6px;top:352.71px;font-size:14.2px;color:#6e6e6e;font-family:'Liberation Serif',serif;font-weight:bold;">T</div>
<svg style="left:0;top:0" width="1000" height="800"><path d="M860 251.500 h12.500" stroke="#6e6e6e" stroke-width="1"/><text x="901.500" y="243.500" font-size="7" font-weight="bold" fill="#6e6e6e" font-family="Liberation Sans">1</text><text x="931" y="251.500" font-size="7" font-weight="bold" fill="#6e6e6e" font-family="Liberation Sans">1</text><rect x="795.500" y="260.500" width="51" height="23" fill="none" stroke="#7a7a7a" stroke-width="1"/><path d="M827.500 260.500 v23" stroke="#7a7a7a"/><rect x="854.500" y="260.500" width="51" height="23" fill="none" stroke="#7a7a7a" stroke-width="1"/><path d="M887.500 260.500 v23" stroke="#7a7a7a"/><circle cx="805.200" cy="266.6" r="1.450" fill="#6e6e6e"/><path d="M809.500 266.6 H819.400" stroke="#6e6e6e" stroke-width="1.500"/><path d="M868.700 266.6 H878.800" stroke="#6e6e6e" stroke-width="1.500"/><circle cx="805.200" cy="272" r="1.450" fill="#6e6e6e"/><path d="M809.500 272 H819.400" stroke="#6e6e6e" stroke-width="1.500"/><path d="M868.700 272 H878.800" stroke="#6e6e6e" stroke-width="1.500"/><circle cx="805.200" cy="277.5" r="1.450" fill="#6e6e6e"/><path d="M809.500 277.5 H819.400" stroke="#6e6e6e" stroke-width="1.500"/><path d="M868.700 277.5 H878.800" stroke="#6e6e6e" stroke-width="1.500"/><text x="863" y="268.3" font-size="4.800" font-weight="bold" fill="#6e6e6e" font-family="Liberation Sans">1</text><text x="863" y="273.7" font-size="4.800" font-weight="bold" fill="#6e6e6e" font-family="Liberation Sans">2</text><text x="863" y="279.2" font-size="4.800" font-weight="bold" fill="#6e6e6e" font-family="Liberation Sans">3</text><path d="M834.3 270.2 h5.4 l-2.7 3.2z" fill="#555"/><path d="M893.8 270.2 h5.4 l-2.7 3.2z" fill="#555"/><path d="M797.6 296.4 H812.4" stroke="#2c7de0" stroke-width="1.550"/><path d="M797.6 299.5 H807.9" stroke="#2c7de0" stroke-width="1.550"/><path d="M797.6 302.6 H812.4" stroke="#2c7de0" stroke-width="1.550"/><path d="M797.6 305.8 H807.9" stroke="#2c7de0" stroke-width="1.550"/><path d="M828.2 296.4 H843.0" stroke="#6e6e6e" stroke-width="1.550"/><path d="M830.7 299.5 H840.5" stroke="#6e6e6e" stroke-width="1.550"/><path d="M828.2 302.6 H843.0" stroke="#6e6e6e" stroke-width="1.550"/><path d="M830.7 305.8 H840.5" stroke="#6e6e6e" stroke-width="1.550"/><path d="M857.8 296.4 H872.7" stroke="#6e6e6e" stroke-width="1.550"/><path d="M862.3 299.5 H872.7" stroke="#6e6e6e" stroke-width="1.550"/><path d="M857.8 302.6 H872.7" stroke="#6e6e6e" stroke-width="1.550"/><path d="M862.3 305.8 H872.7" stroke="#6e6e6e" stroke-width="1.550"/><path d="M889.3 296.4 H904.2" stroke="#6e6e6e" stroke-width="1.550"/><path d="M889.3 299.5 H904.2" stroke="#6e6e6e" stroke-width="1.550"/><path d="M889.3 302.6 H904.2" stroke="#6e6e6e" stroke-width="1.550"/><path d="M889.3 305.8 H904.2" stroke="#6e6e6e" stroke-width="1.550"/><path d="M798.5 323 V335.8" stroke="#6e6e6e" stroke-width="1.300"/><path d="M795.9 325 L798.5 322 L801.1 325z M795.9 333.8 L798.5 336.8 L801.1 333.8z" fill="#6e6e6e"/><path d="M802.500 326.5 H812.400" stroke="#6e6e6e" stroke-width="1.200"/><path d="M802.500 329.6 H812.400" stroke="#6e6e6e" stroke-width="1.200"/><path d="M802.500 332.8 H812.400" stroke="#6e6e6e" stroke-width="1.200"/><path d="M872.3 323 V335.8" stroke="#6e6e6e" stroke-width="1.300"/><path d="M869.6999999999999 325 L872.3 322 L874.9 325z M869.6999999999999 333.8 L872.3 336.8 L874.9 333.8z" fill="#6e6e6e"/><path d="M876.800 326 H887" stroke="#6e6e6e" stroke-width="1.800"/><path d="M876.800 329.6 H887" stroke="#6e6e6e" stroke-width="1.800"/><path d="M876.800 333.2 H887" stroke="#6e6e6e" stroke-width="1.800"/><path d="M796.8 366 H812.3" stroke="#6e6e6e" stroke-width="1.200"/><path d="M798.8 363.5 L795.8 366 L798.8 368.5z M810.3 363.5 L813.3 366 L810.3 368.5z" fill="#6e6e6e"/><path d="M871 366.5 H887" stroke="#6e6e6e" stroke-width="1.200"/><path d="M873 364.0 L870 366.5 L873 369.0z M885 364.0 L888 366.5 L885 369.0z" fill="#6e6e6e"/><text x="873" y="362.600" font-size="8.800" font-weight="bold" fill="#6e6e6e" font-family="Liberation Sans" letter-spacing="-0.300">AV</text><path d="M798.500 420.500 L812 426 H798.500z" fill="none" stroke="#b9b9b9" stroke-width="1.200"/><path d="M798.500 429 H812.500 L798.500 435.300z" fill="#b9b9b9"/><path d="M834.200 420.500 V433 H827 z" fill="none" stroke="#b9b9b9" stroke-width="1.200"/><path d="M836.500 420 V433.500 H844z" fill="#b9b9b9"/><path d="M861.500 419.500 V431 H873 M857.500 423.500 H869 V435" fill="none" stroke="#b9b9b9" stroke-width="1.600"/><rect x="871.500" y="432.500" width="1.600" height="1.600" fill="#b9b9b9"/><path d="M889.800 420.500 V434.500" stroke="#b9b9b9" stroke-width="1.600"/><rect x="892.500" y="421.500" width="7" height="3.500" fill="#b9b9b9"/><rect x="893" y="428" width="9.500" height="4.500" fill="none" stroke="#b9b9b9" stroke-width="1.400"/><path d="M906.9 425.4 h5.4 l-2.7 3.2z" fill="#b9b9b9"/><path d="M906.9 451.9 h5.4 l-2.7 3.2z" fill="#b9b9b9"/><path d="M800 459.500 A7 7 0 1 1 809.500 460.500" fill="none" stroke="#b9b9b9" stroke-width="1.500"/><path d="M796.300 456 L800.300 462 L804 456.500z" fill="#b9b9b9"/><path d="M839.500 459.500 A7 7 0 1 0 830 460.500" fill="none" stroke="#b9b9b9" stroke-width="1.500"/><path d="M843.300 456 L839.300 462 L835.600 456.500z" fill="#b9b9b9"/><rect x="861.500" y="446.500" width="11" height="8" fill="none" stroke="#b9b9b9" stroke-width="1.100"/><rect x="864" y="449.500" width="11" height="9.500" fill="#fafafa" stroke="#b9b9b9" stroke-width="1.300"/><path d="M866 457.500 l2.500 -3 l1.800 2 l1.200 -1 l1.800 2z" fill="#b9b9b9"/><path d="M857 447 V458 H862 M859.800 455.500 L862.500 458 L859.800 460.500" fill="none" stroke="#b9b9b9" stroke-width="1.200"/><path d="M890 456 V447.500 H899" fill="none" stroke="#b9b9b9" stroke-width="1.600"/><rect x="893" y="450.500" width="9.500" height="9" fill="none" stroke="#b9b9b9" stroke-width="1.600"/><path d="M798 488 l1.300 -4.300 l9 -9 a1.500 1.500 0 0 1 2.100 0 l1.200 1.200 a1.500 1.500 0 0 1 0 2.100 l-9 9z" fill="none" stroke="#b9b9b9" stroke-width="1.300" stroke-linejoin="round"/><path d="M806.500 476.500 l3.300 3.300" stroke="#b9b9b9" stroke-width="1"/><path d="M940.5 478.9 h5.4 l-2.7 3.2z" fill="#b9b9b9"/><rect x="802.90" y="536.50" width="3.400" height="4" fill="#555" transform="rotate(0 804.6 544.1)"/><rect x="802.90" y="536.50" width="3.400" height="4" fill="#555" transform="rotate(45 804.6 544.1)"/><rect x="802.90" y="536.50" width="3.400" height="4" fill="#555" transform="rotate(90 804.6 544.1)"/><rect x="802.90" y="536.50" width="3.400" height="4" fill="#555" transform="rotate(135 804.6 544.1)"/><rect x="802.90" y="536.50" width="3.400" height="4" fill="#555" transform="rotate(180 804.6 544.1)"/><rect x="802.90" y="536.50" width="3.400" height="4" fill="#555" transform="rotate(225 804.6 544.1)"/><rect x="802.90" y="536.50" width="3.400" height="4" fill="#555" transform="rotate(270 804.6 544.1)"/><rect x="802.90" y="536.50" width="3.400" height="4" fill="#555" transform="rotate(315 804.6 544.1)"/><circle cx="804.6" cy="544.1" r="4.300" fill="none" stroke="#555" stroke-width="3.200"/><rect x="795.900" y="561.500" width="12.500" height="12.500" rx="1" fill="#fff" stroke="#cdcdcd"/><rect x="795.400" y="601.800" width="13.200" height="13.200" rx="1.200" fill="#2376d4"/><path d="M798.300 608.500 l2.700 2.900 l4.900 -6" fill="none" stroke="#fff" stroke-width="1.700"/><rect x="795.900" y="624.800" width="12.500" height="12.500" rx="1" fill="#fff" stroke="#8c8c8c"/></svg>
<div class="a" style="left:964px;top:208px;width:36px;height:35.500px;background:#d9318f"></div>
<svg style="left:0;top:0" width="1000" height="800" fill="none" stroke-linejoin="round"><path d="M977 152.500 V160.500 H988.500 V149.500 L984.500 145.500 H978 V148" stroke="#e34850" stroke-width="1.500" fill="#fbe3e4"/><path d="M984.500 145.500 V149.500 H988.500" stroke="#e34850" stroke-width="1.200"/><rect x="973.300" y="148" width="6.500" height="4" fill="#e34850"/><path d="M980.500 191.500 H975 V183.500 H979 L981 185.500" stroke="#5c5ce0" stroke-width="1.400" fill="#e4e4fb"/><path d="M984 191.500 H990.500 V186 L987.800 183.300 H984 V186" stroke="#5c5ce0" stroke-width="1.400" fill="#e4e4fb"/><path d="M987.800 183.300 V186 H990.500" stroke="#5c5ce0" stroke-width="1"/><rect x="972.600" y="185" width="5.500" height="3.300" fill="#5c5ce0"/><rect x="981" y="186.500" width="3.200" height="3" fill="#5c5ce0"/><path d="M982.400 188 V195" stroke="#5c5ce0" stroke-width="1.800"/><path d="M978.800 194.300 H986 L982.400 199z" fill="#5c5ce0" stroke="none"/><rect x="974.200" y="218" width="15.500" height="6.500" rx="0.800" stroke="#fff" stroke-width="1.500"/><rect x="974.200" y="227.800" width="7" height="6" rx="0.800" stroke="#fff" stroke-width="1.500"/><path d="M984.500 228.200 H990.200 M984.500 230.800 H990.200 M984.500 233.400 H990.200" stroke="#f3b6d8" stroke-width="1"/><path d="M982 269 H975.500 V254 H982.500 L987 258.500 V262" stroke="#1f97a0" stroke-width="1.600" fill="#d4eef0"/><path d="M982.500 254 V258.500 H987" stroke="#1f97a0" stroke-width="1.200"/><path d="M982 266 H989.500 M987 263 L990.300 266 L987 269" stroke="#1f97a0" stroke-width="1.700"/><rect x="983" y="290.700" width="7" height="14" rx="0.800" stroke="#7ccc48" stroke-width="1.500" fill="#e3f5d6"/><rect x="974.700" y="297.500" width="6.500" height="7.300" stroke="#7ccc48" stroke-width="1.400" stroke-dasharray="1.600 1.200"/><path d="M980.500 295.500 L975.500 291 M975 294.500 V290.500 H979" stroke="#7ccc48" stroke-width="1.600"/><path d="M982 339 H974 V325 H981 L985.500 329.500 V333" stroke="#dcb511" stroke-width="1.600" fill="#f7efc8"/><path d="M981 325 V329.500 H985.500" stroke="#dcb511" stroke-width="1.200"/><path d="M983 333.500 H990.300 V339 H986 L984 341.500 V339 H983z" fill="#dcb511" stroke="#dcb511" stroke-width="1"/><path d="M985 336.200 H988.500" stroke="#f7efc8" stroke-width="1"/><path d="M975.500 362 H988.700 a1.300 1.300 0 0 1 1.300 1.300 V372 a1.300 1.300 0 0 1 -1.300 1.300 H982 L978.700 377.300 V373.300 H975.500 a1.300 1.300 0 0 1 -1.300 -1.300 V363.300 a1.300 1.300 0 0 1 1.300 -1.300z" fill="#dcb625"/><path d="M977.500 366 H986.700 M977.500 369.200 H986.700" stroke="#fff" stroke-width="1.200"/><path d="M973.500 413 L976 406 L984.500 397.500 a1.800 1.800 0 0 1 2.500 0 l1 1 a1.800 1.800 0 0 1 0 2.500 L979.500 409.500 L973.500 413z" stroke="#8f45dc" stroke-width="1.500" fill="#eadcf8"/><path d="M980 412.500 c2 -0.500 3.500 -3.500 2.500 -4 c-1 -0.300 -1.500 3 0 4 c1.500 0.800 3 -1.500 3.500 -3 c-0.300 2 0.500 3.300 2 3 c1 -0.300 2 -1 2.800 -2" stroke="#8f45dc" stroke-width="1.300"/><path d="M974 447 H990.200" stroke="#8f45dc" stroke-width="1.500"/><path d="M974.500 438.500 l4 4.500 M978.500 438.500 l-4 4.500" stroke="#8f45dc" stroke-width="1.300"/><path d="M980 443.500 c2.500 -1.500 4.500 -6.500 3.300 -8.500 c-1.300 -1.500 -2.300 3 -1.500 6.500 c0.500 2.500 2.700 2.500 3.700 -0.800 c-0.200 1.800 0.800 3.300 2.200 2.500 c1 -0.500 1.800 -1.300 2.500 -2.500" stroke="#8f45dc" stroke-width="1.400"/><path d="M977 476 V469.500 H983.500 L987 473 V476" stroke="#41b254" stroke-width="1.500" fill="#d6f0da"/><path d="M983.500 469.500 V473 H987" stroke="#41b254" stroke-width="1"/><rect x="974" y="475.500" width="16" height="5.500" rx="1" fill="#41b254"/><path d="M977.500 481 V486 H986.500 V481" stroke="#41b254" stroke-width="1.300" stroke-dasharray="1.500 1"/><path d="M988.500 468.500 v2.400 M987.300 469.700 h2.400" stroke="#41b254" stroke-width="0.900"/><path d="M982 505 L988.700 507.500 V513.500 c0 4.500 -3.500 7 -6.700 8.500 c-3.200 -1.500 -6.700 -4 -6.700 -8.500 V507.500z" stroke="#6669ee" stroke-width="1.600" fill="#fff"/><path d="M982 506 L976.300 508.200 V513.500 c0 3.800 2.900 6 5.700 7.400z" fill="#dcdcfa" stroke="none"/><rect x="973.500" y="545.500" width="16.500" height="8" rx="1" stroke="#c63dd6" stroke-width="1.600" fill="#f3d6f7"/><path d="M977 549.500 V553 M980.300 549.500 V553 M983.500 549.500 V553 M986.800 549.500 V553" stroke="#c63dd6" stroke-width="1.300"/><path d="M978 577.800 H986 M976.500 580.300 H987.500" stroke="#8bd44e" stroke-width="1.500"/><rect x="974.500" y="583" width="15" height="10" rx="1.200" stroke="#8bd44e" stroke-width="1.700" fill="#e4f5d5"/><path d="M975 626.500 L983 618.500" stroke="#6a6a6a" stroke-width="2.600" stroke-linecap="round"/><path d="M987.800 614.300 a3.800 3.800 0 1 0 1.400 3.200 l-2.800 0.600 l-1.300 -1.800z" fill="#6a6a6a" stroke="#6a6a6a" stroke-width="0.800"/><circle cx="987" cy="626" r="4" fill="#6a6a6a" stroke="#fafafa" stroke-width="1"/><path d="M984.800 626 H989.200 M987 623.800 V628.200" stroke="#fafafa" stroke-width="1.200"/></svg>
</body></html>
